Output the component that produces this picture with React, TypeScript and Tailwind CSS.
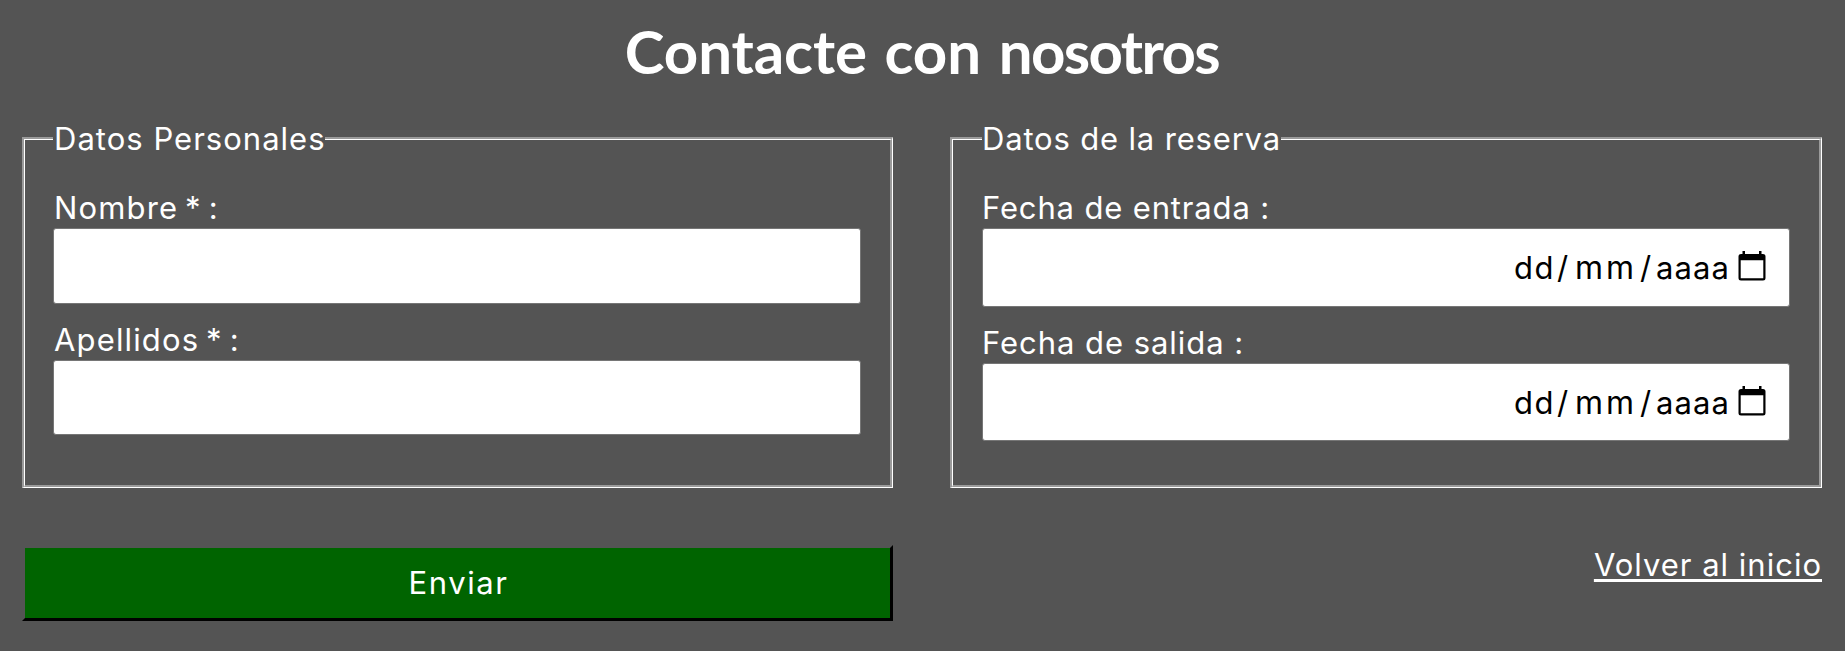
import type { ReactNode } from "react";

function TextInput({ id, className }: { id: string; className: string }) {
  return (
    <input
      id={id}
      type="text"
      className={`block w-full rounded-[3px] border border-[#767676] bg-white px-6 text-black ${className}`}
    />
  );
}

function CalendarIcon() {
  return (
    <svg viewBox="0 0 28 30" className="h-[30px] w-7 shrink-0" fill="none">
      <path
        d="M4.500 0h2.500v3h14V0h2.500v3H25a2.500 2.500 0 0 1 2.500 2.500v21.500a2.500 2.500 0 0 1-2.500 2.500H3A2.500 2.500 0 0 1 .5 27V5.500A2.500 2.500 0 0 1 3 3h1.500zM2.700 9.200v18h22.600v-18z"
        fill="#000"
        fillRule="evenodd"
      />
    </svg>
  );
}

function DateInput({ className }: { className: string }) {
  return (
    <div
      className={`flex w-full items-start justify-end rounded-[3px] border border-[#767676] bg-white pr-[23px] text-black ${className}`}
    >
      <div className="mr-[9px] flex leading-10">
        <span className="w-[43px] tracking-[1.6px]">dd</span>
        <span className="w-[18px]">/</span>
        <span className="w-[65px] text-[32px] tracking-[3px]">mm</span>
        <span className="w-[16px]">/</span>
        <span className="w-[73px] tracking-[1.1px]">aaaa</span>
      </div>
      <div className="pt-[3px]">
        <CalendarIcon />
      </div>
    </div>
  );
}

function Group({
  title,
  titleClass,
  bodyClass,
  children,
}: {
  title: string;
  titleClass: string;
  bodyClass: string;
  children: ReactNode;
}) {
  return (
    <section
      role="group"
      aria-label={title}
      className="h-[351px] border-t-2 border-r border-b border-l-2 border-t-[#9a9a9a] border-r-white border-b-white border-l-[#9a9a9a]"
    >
      <div
        className={`h-full border-t border-r-2 border-b-2 border-l border-t-white border-r-[#9a9a9a] border-b-[#9a9a9a] border-l-white pr-[29px] ${bodyClass}`}
      >
        <div className="-mt-5 flex h-[37px]">
          <span className={`bg-[#545454] leading-[37px] whitespace-nowrap ${titleClass}`}>{title}</span>
        </div>
        <div className="pt-[31px]">{children}</div>
      </div>
    </section>
  );
}

export default function App() {
  return (
    <main className="h-[651px] overflow-hidden bg-[#545454] pl-[22px] pr-[23px] font-[Inter,sans-serif] text-[31px] text-white">
      <h1 className="h-[137px] pt-[7px] text-center font-[Lato,sans-serif] text-[60px] leading-[88px] font-bold whitespace-nowrap [word-spacing:3px]">
        <span className="tracking-[-0.1px]">Contacte</span> <span>con</span> <span className="tracking-[-1.6px]">nosotros</span>
      </h1>
      <form>
        <div className="grid grid-cols-[871px_872px] gap-x-[57px]">
          <Group title="Datos Personales" bodyClass="pl-7" titleClass="w-[272px] pl-px tracking-[1.02px]">
            <label htmlFor="nombre" className="block pl-px leading-10 tracking-[1.15px] [word-spacing:-3px]">Nombre * :</label>
            <TextInput id="nombre" className="h-[76px]" />
            <label htmlFor="apellidos" className="mt-4 block pl-px leading-10 tracking-[1.15px] [word-spacing:-3px]">Apellidos * :</label>
            <TextInput id="apellidos" className="h-[75px]" />
          </Group>
          <Group title="Datos de la reserva" bodyClass="pl-[29px]" titleClass="w-[299px] tracking-[0.83px]">
            <label className="block leading-10 tracking-[0.85px]">Fecha de entrada :</label>
            <DateInput className="h-[79px] pt-[19px]" />
            <label className="mt-4 block leading-10 tracking-[0.95px]">Fecha de salida :</label>
            <DateInput className="h-[78px] pt-[19px]" />
          </Group>
        </div>
        <div className="mt-[57px] flex items-start justify-between">
          <button
            type="button"
            className="h-[76px] w-[871px] border-[3px] border-t-[#545454] border-r-black border-b-black border-l-[#545454] bg-[#006400] pl-0.5 leading-[70px] tracking-[1.6px]"
          >
            Enviar
          </button>
          <a href="#" className="leading-10 tracking-[1px] underline decoration-[3px] underline-offset-[3px]">
            Volver al inicio
          </a>
        </div>
      </form>
    </main>
  );
}
